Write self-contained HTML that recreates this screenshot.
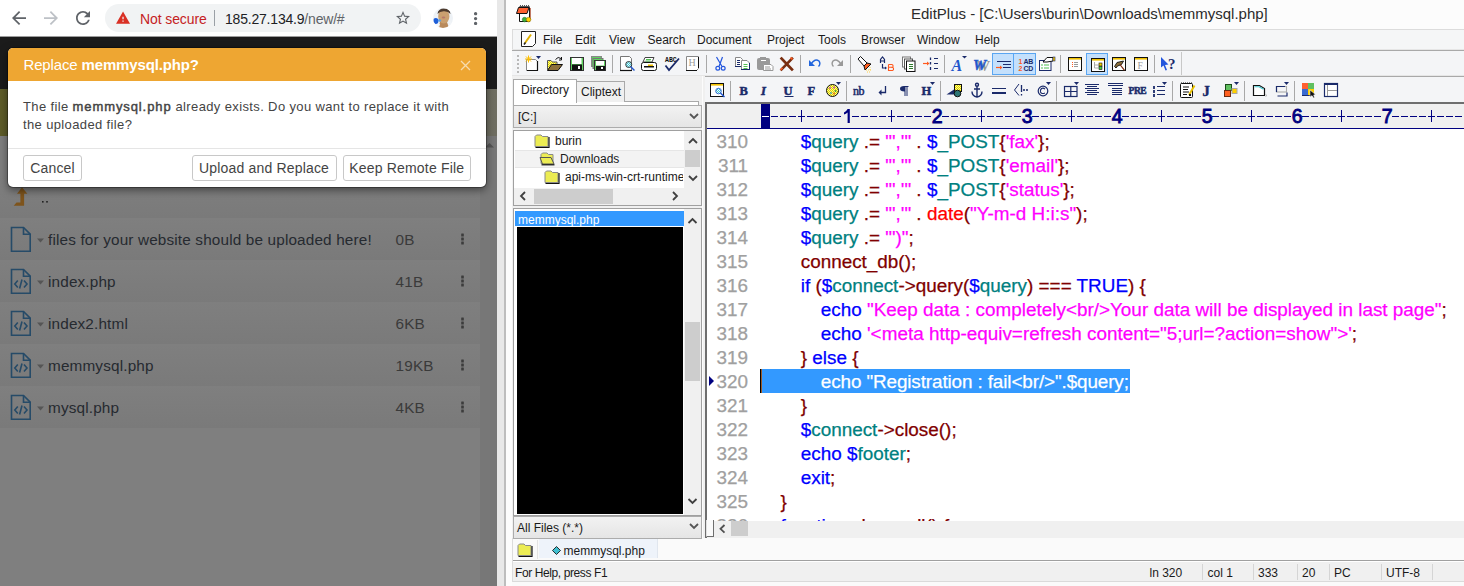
<!DOCTYPE html>
<html><head><meta charset="utf-8">
<style>
*{margin:0;padding:0;box-sizing:border-box}
html,body{width:1464px;height:586px;overflow:hidden;background:#fff;font-family:"Liberation Sans",sans-serif;position:relative}
.a{position:absolute}
/* chrome */
#chrome{left:0;top:0;width:497px;height:586px;overflow:hidden;background:#fff}
#omni{left:105px;top:4px;width:316px;height:28px;border-radius:14px;background:#f1f3f4}
#page{left:0;top:37px;width:497px;height:549px;background:#7f7f7f}
#modal{left:8px;top:48px;width:478px;height:139px;background:#fff;border-radius:5px;overflow:hidden;box-shadow:0 0 0 1px rgba(0,0,0,.3),0 3px 9px rgba(0,0,0,.5)}
#mhead{left:0;top:0;width:478px;height:33px;background:#eea632}
.btn{position:absolute;top:107px;height:26px;border:1px solid #c8c8c8;border-radius:3px;background:#fff;color:#444;font-size:14px;line-height:24px;text-align:center;letter-spacing:0.18px}
.row{position:absolute;left:0;width:480px;height:42px}
.fname{position:absolute;left:48px;top:12px;font-size:15.3px;letter-spacing:0.16px;color:#262a30;white-space:nowrap}
.fsize{position:absolute;left:395.5px;top:12px;font-size:15.3px;letter-spacing:0.2px;color:#3a3a3a}
/* editplus */
#sep1{left:497px;top:0;width:7px;height:586px;background:#e8e8e8}
#sep2{left:504px;top:0;width:2px;height:586px;background:#bdbdbd}
#ep{left:506px;top:0;width:958px;height:586px;background:#fcfcfc}
.menu{position:absolute;top:32px;font-size:12px;color:#1a1a1a}
.ln{position:absolute;left:0;width:43px;text-align:right;font-size:18.9px;line-height:25px;color:#a0a0a0;height:24px;-webkit-text-stroke:0.25px #a0a0a0}
.cd{position:absolute;font-size:18.9px;line-height:25px;white-space:pre;height:24px;-webkit-text-stroke:0.25px currentColor}
.t12{position:absolute;font-size:12px;line-height:15px;color:#1a1a1a;white-space:nowrap}
</style></head><body>
<div id="chrome" class="a">
  <svg class="a" style="left:0;top:0" width="497" height="36">
    <path transform="translate(8.5,7.5) scale(0.875)" d="M20 11H7.83l5.59-5.59L12 4l-8 8 8 8 1.41-1.41L7.83 13H20v-2z" fill="#5f6368"/>
    <path transform="translate(40.5,7.5) scale(0.875)" d="M12 4l-1.41 1.41L16.17 11H4v2h12.17l-5.58 5.59L12 20l8-8z" fill="#bdc1c6"/>
    <path transform="translate(72.5,7.5) scale(0.875)" d="M17.65 6.35C16.2 4.9 14.21 4 12 4c-4.42 0-7.99 3.58-7.99 8s3.57 8 7.99 8c3.73 0 6.84-2.55 7.730-6h-2.08c-.82 2.33-3.04 4-5.65 4-3.31 0-6-2.690-6-6s2.69-6 6-6c1.66 0 3.14.69 4.22 1.78L13 11h7V4l-2.35 2.35z" fill="#5f6368"/>
    <path transform="translate(465.85,8.75) scale(0.8125)" d="M12 8c1.1 0 2-.9 2-2s-.9-2-2-2-2 .9-2 2 .9 2 2 2zm0 2c-1.1 0-2 .9-2 2s.9 2 2 2 2-.9 2-2-.9-2-2-2zm0 6c-1.1 0-2 .9-2 2s.9 2 2 2 2-.9 2-2-.9-2-2-2z" fill="#5f6368"/>
  </svg>
  <div id="omni" class="a"></div>
  <div class="a" style="left:0;top:36px;width:497px;height:1px;background:#9c9c9c"></div>
  <svg class="a" style="left:0;top:0" width="497" height="36">
    <path transform="translate(115.4,10.3) scale(0.636)" d="M1 21h22L12 2 1 21zm12-3h-2v-2h2v2zm0-4h-2v-4h2v4z" fill="#d93025"/>
    <path transform="translate(394.6,9.6) scale(0.7)" d="M22 9.24l-7.19-.62L12 2 9.19 8.630 2 9.24l5.46 4.73L5.82 21 12 17.27 18.18 21l-1.63-7.03L22 9.24zM12 15.4l-3.76 2.27 1-4.28-3.32-2.88 4.38-.38L12 6.1l1.71 4.04 4.38.38-3.32 2.88 1 4.28L12 15.4z" fill="#5f6368"/>
    <defs><clipPath id="av"><circle cx="443" cy="18" r="10"/></clipPath></defs>
    <g clip-path="url(#av)">
      <rect x="433" y="8" width="20" height="20" fill="#eef2f6"/>
      <path d="M440 22L447 22 449 28 438 28Z" fill="#b98a5c"/>
      <ellipse cx="443.8" cy="16.5" rx="5.6" ry="7" fill="#caa070"/>
      <path d="M437.5 14Q438 8.5 444 8.5Q450 8.5 450.5 14Q448 11 444 11.2Q440 11 437.5 14Z" fill="#4d3b2e"/>
      <ellipse cx="443.5" cy="17.5" rx="1.8" ry="1" fill="#b8786a"/>
      <path d="M433 28L435 22 440 24 439 28Z" fill="#f6f8fa"/>
      <path d="M450 28L450 21 453 23 453 28Z" fill="#f1f4f7"/>
      <ellipse cx="435.8" cy="21" rx="2.6" ry="3" fill="#1f5fd8"/>
      <ellipse cx="439.5" cy="20.5" rx="1.6" ry="1.2" fill="#5aa0e8"/>
    </g>
  </svg>
  <div class="a" style="left:140px;top:10.5px;font-size:14px;color:#c5221f;letter-spacing:-0.1px">Not secure</div>
  <div class="a" style="left:214px;top:10px;width:1px;height:16px;background:#9aa0a6"></div>
  <div class="a" style="left:225px;top:10.5px;font-size:14px;color:#202124;letter-spacing:-0.2px">185.27.134.9<span style="color:#5f6368;-webkit-text-stroke-color:#5f6368">/new/#</span></div>
  <div id="page" class="a">
    <div class="a" style="left:0;top:0;width:497px;height:52px;background:#1b1b1b"></div>
    <div class="a" style="left:0;top:52px;width:497px;height:47px;background:linear-gradient(90deg,#5e5c29,#6f6e62)"></div>
    <div class="a" style="left:0;top:99px;width:480px;height:450px;background:#7f7f7f"></div>
    <div class="a" style="left:480px;top:99px;width:17px;height:450px;background:#777"></div>
    <div class="row" style="top:139px;background:linear-gradient(#7f7f7f,#7a7a7a)"></div>
    <div class="row" style="top:181px;background:linear-gradient(#7f7f7f,#7a7a7a)"></div>
    <div class="row" style="top:223px;background:linear-gradient(#7f7f7f,#7a7a7a)"></div>
    <div class="row" style="top:265px;background:linear-gradient(#7f7f7f,#7a7a7a)"></div>
    <div class="row" style="top:307px;background:linear-gradient(#7f7f7f,#7a7a7a)"></div>
    <div class="row" style="top:349px;background:linear-gradient(#7f7f7f,#7a7a7a)"></div>
  </div>
  <svg class="a" style="left:0;top:180px" width="497" height="250">
    <path d="M22 7.2L27.4 13.7H24.1V25.7H13.7L16.5 22.4H20.4V13.7H17Z" fill="#7e541c"/>
    <rect x="42" y="21" width="1.6" height="1.6" fill="#222"/><rect x="46.2" y="21" width="1.6" height="1.6" fill="#222"/>
    <g fill="none" stroke="#264b68" stroke-width="1.6">
      <path d="M11.5 47.5H23.5L30.2 54.2V71.3H11.5Z"/><path d="M23.5 47.5V54.2H30.2"/>
      <g transform="translate(0,42)"><path d="M11.5 47.5H23.5L30.2 54.2V71.3H11.5Z"/><path d="M23.5 47.5V54.2H30.2"/><path d="M17.8 58.5L14.8 62 17.8 65.5M24 58.5L27 62 24 65.5M22 57.5L19.6 66.5"/></g>
      <g transform="translate(0,84)"><path d="M11.5 47.5H23.5L30.2 54.2V71.3H11.5Z"/><path d="M23.5 47.5V54.2H30.2"/><path d="M17.8 58.5L14.8 62 17.8 65.5M24 58.5L27 62 24 65.5M22 57.5L19.6 66.5"/></g>
      <g transform="translate(0,126)"><path d="M11.5 47.5H23.5L30.2 54.2V71.3H11.5Z"/><path d="M23.5 47.5V54.2H30.2"/><path d="M17.8 58.5L14.8 62 17.8 65.5M24 58.5L27 62 24 65.5M22 57.5L19.6 66.5"/></g>
      <g transform="translate(0,168)"><path d="M11.5 47.5H23.5L30.2 54.2V71.3H11.5Z"/><path d="M23.5 47.5V54.2H30.2"/><path d="M17.8 58.5L14.8 62 17.8 65.5M24 58.5L27 62 24 65.5M22 57.5L19.6 66.5"/></g>
    </g>
    <g fill="#555"><path d="M37 58.5H44L40.5 62.5Z"/><path d="M37 100.5H44L40.5 104.5Z"/><path d="M37 142.5H44L40.5 146.5Z"/><path d="M37 184.5H44L40.5 188.5Z"/><path d="M37 226.5H44L40.5 230.5Z"/></g>
    <g fill="#3c3c3c"><rect x="461.2" y="53.5" width="2.6" height="3" rx="0.5"/><rect x="461.2" y="57.5" width="2.6" height="3" rx="0.5"/><rect x="461.2" y="61.5" width="2.6" height="3" rx="0.5"/><rect x="461.2" y="95.5" width="2.6" height="3" rx="0.5"/><rect x="461.2" y="99.5" width="2.6" height="3" rx="0.5"/><rect x="461.2" y="103.5" width="2.6" height="3" rx="0.5"/><rect x="461.2" y="137.5" width="2.6" height="3" rx="0.5"/><rect x="461.2" y="141.5" width="2.6" height="3" rx="0.5"/><rect x="461.2" y="145.5" width="2.6" height="3" rx="0.5"/><rect x="461.2" y="179.5" width="2.6" height="3" rx="0.5"/><rect x="461.2" y="183.5" width="2.6" height="3" rx="0.5"/><rect x="461.2" y="187.5" width="2.6" height="3" rx="0.5"/><rect x="461.2" y="221.5" width="2.6" height="3" rx="0.5"/><rect x="461.2" y="225.5" width="2.6" height="3" rx="0.5"/><rect x="461.2" y="229.5" width="2.6" height="3" rx="0.5"/></g>
  </svg>
  <svg class="a" style="left:480px;top:135px" width="17" height="20"><path d="M5 12.5L9.5 8 14 12.5Z" fill="#555"/></svg>
  <div class="fname" style="top:231px">files for your website should be uploaded here!</div>
  <div class="fname" style="top:273px">index.php</div>
  <div class="fname" style="top:315px">index2.html</div>
  <div class="fname" style="top:357px">memmysql.php</div>
  <div class="fname" style="top:399px">mysql.php</div>
  <div class="fsize" style="top:231px">0B</div>
  <div class="fsize" style="top:273px">41B</div>
  <div class="fsize" style="top:315px">6KB</div>
  <div class="fsize" style="top:357px">19KB</div>
  <div class="fsize" style="top:399px">4KB</div>
  <div id="modal" class="a">
    <div id="mhead" class="a"></div>
    <div class="a" style="left:15.5px;top:8px;font-size:15px;color:#fff;letter-spacing:-0.15px;white-space:nowrap">Replace <b>memmysql.php?</b></div>
    <svg class="a" style="left:450px;top:10px" width="16" height="16"><path d="M3 3L12 12M12 3L3 12" stroke="#f7dcae" stroke-width="1.3"/></svg>
    <div class="a" style="left:15px;top:50px;width:470px;font-size:13px;line-height:18px;color:#444;white-space:nowrap;letter-spacing:0.37px">The file <span style="-webkit-text-stroke:0.45px #444;letter-spacing:0.9px">memmysql.php</span> already exists. Do you want to replace it with<br>the uploaded file?</div>
    <div class="a" style="left:0;top:100px;width:478px;height:1px;background:#e5e5e5"></div>
    <div class="btn" style="left:15px;width:59px">Cancel</div>
    <div class="btn" style="left:183.5px;width:145px">Upload and Replace</div>
    <div class="btn" style="left:334.5px;width:128.5px">Keep Remote File</div>
  </div>
</div>
<div id="sep1" class="a"></div>
<div id="sep2" class="a"></div>
<div id="ep" class="a">
  <div class="a" style="left:405px;top:5px;font-size:15px;color:#2b2b2b;white-space:nowrap">EditPlus - [C:\Users\burin\Downloads\memmysql.php]</div>
  <!-- menubar -->
  <div class="a" style="left:6px;top:29px;width:952px;height:21px;background:#f5f6f7;border-top:1px solid #dcdcdc;border-left:1px solid #dcdcdc"></div>
  <div class="a" style="left:6px;top:49px;width:952px;height:1px;background:#e6e6e6"></div><div class="a" style="left:6px;top:50px;width:952px;height:1px;background:#a9a9a9"></div>
  <!-- toolbar1 -->
  <div class="a" style="left:6px;top:51px;width:952px;height:24px;background:#f4f5f7"></div>
  <div class="a" style="left:6px;top:75px;width:952px;height:1px;background:#e6e6e6"></div><div class="a" style="left:6px;top:76px;width:952px;height:1px;background:#a9a9a9"></div>
  <!-- left pane -->
  <div class="a" style="left:6px;top:76px;width:193px;height:462px;background:#f0f0f0"></div>
  <!-- toolbar2 -->
  <div class="a" style="left:199px;top:77px;width:759px;height:26px;background:#f4f5f7"></div>
  <!-- editor -->
  <div class="a" style="left:196px;top:76px;width:3px;height:462px;background:#f0f0f0;border-left:1px solid #fcfcfc"></div>
  <div class="a" style="left:199px;top:102px;width:759px;height:436px;background:#fff;border-top:2px solid #6e6e6e;border-left:2px solid #6e6e6e"></div>
  <div class="a" style="left:201px;top:104px;width:757px;height:24px;background:#f0f0f0"></div>
  <div class="a" style="left:201px;top:128px;width:757px;height:1px;background:#000080"></div>
  <div class="a" style="left:255px;top:104px;width:9px;height:24px;background:#000080"></div>
  <div class="a" style="left:201px;top:521px;width:757px;height:17px;background:#f0f0f0"></div>
  <div class="a" style="left:200px;top:520px;width:8px;height:17px;background:#fafafa;border-right:1.5px solid #6e6e6e;border-bottom:1.5px solid #6e6e6e;border-left:1px solid #e0e0e0"></div>
  <div class="a" style="left:225px;top:521px;width:17px;height:15px;background:#cdcdcd"></div>
  <svg class="a" style="left:210px;top:521px" width="12" height="16"><path d="M8.5 4L4.5 7.8 8.5 11.6" fill="none" stroke="#505050" stroke-width="1.8"/></svg>
<div class="a" style="left:199px;top:129px;width:759px;height:392px;overflow:hidden">
<div class="a" style="left:55px;top:240px;width:370px;height:24px;background:#3399ff"></div>
<div class="a" style="left:55px;top:240px;width:1px;height:24px;background:#000"></div><div class="a" style="left:56px;top:240px;width:1px;height:24px;background:#9a5a28"></div>
<svg class="a" style="left:4px;top:247px" width="6" height="10"><path d="M0 0L5 5 0 10Z" fill="#000080"/></svg>
<div class="ln" style="top:0px">310</div>
<div class="cd" style="top:0px;left:95.7px"><span style="color:#0000ff;-webkit-text-stroke-color:#0000ff">$</span><span style="color:#008080;-webkit-text-stroke-color:#008080">query</span><span style="color:#800000;-webkit-text-stroke-color:#800000"> .= </span><span style="color:#ff00ff;-webkit-text-stroke-color:#ff00ff">"','"</span><span style="color:#800000;-webkit-text-stroke-color:#800000"> . </span><span style="color:#0000ff;-webkit-text-stroke-color:#0000ff">$</span><span style="color:#008080;-webkit-text-stroke-color:#008080">_POST</span><span style="color:#800000;-webkit-text-stroke-color:#800000">{</span><span style="color:#ff00ff;-webkit-text-stroke-color:#ff00ff">'fax'</span><span style="color:#800000;-webkit-text-stroke-color:#800000">};</span></div>
<div class="ln" style="top:24px">311</div>
<div class="cd" style="top:24px;left:95.7px"><span style="color:#0000ff;-webkit-text-stroke-color:#0000ff">$</span><span style="color:#008080;-webkit-text-stroke-color:#008080">query</span><span style="color:#800000;-webkit-text-stroke-color:#800000"> .= </span><span style="color:#ff00ff;-webkit-text-stroke-color:#ff00ff">"','"</span><span style="color:#800000;-webkit-text-stroke-color:#800000"> . </span><span style="color:#0000ff;-webkit-text-stroke-color:#0000ff">$</span><span style="color:#008080;-webkit-text-stroke-color:#008080">_POST</span><span style="color:#800000;-webkit-text-stroke-color:#800000">{</span><span style="color:#ff00ff;-webkit-text-stroke-color:#ff00ff">'email'</span><span style="color:#800000;-webkit-text-stroke-color:#800000">};</span></div>
<div class="ln" style="top:48px">312</div>
<div class="cd" style="top:48px;left:95.7px"><span style="color:#0000ff;-webkit-text-stroke-color:#0000ff">$</span><span style="color:#008080;-webkit-text-stroke-color:#008080">query</span><span style="color:#800000;-webkit-text-stroke-color:#800000"> .= </span><span style="color:#ff00ff;-webkit-text-stroke-color:#ff00ff">"','"</span><span style="color:#800000;-webkit-text-stroke-color:#800000"> . </span><span style="color:#0000ff;-webkit-text-stroke-color:#0000ff">$</span><span style="color:#008080;-webkit-text-stroke-color:#008080">_POST</span><span style="color:#800000;-webkit-text-stroke-color:#800000">{</span><span style="color:#ff00ff;-webkit-text-stroke-color:#ff00ff">'status'</span><span style="color:#800000;-webkit-text-stroke-color:#800000">};</span></div>
<div class="ln" style="top:72px">313</div>
<div class="cd" style="top:72px;left:95.7px"><span style="color:#0000ff;-webkit-text-stroke-color:#0000ff">$</span><span style="color:#008080;-webkit-text-stroke-color:#008080">query</span><span style="color:#800000;-webkit-text-stroke-color:#800000"> .= </span><span style="color:#ff00ff;-webkit-text-stroke-color:#ff00ff">"','"</span><span style="color:#800000;-webkit-text-stroke-color:#800000"> . </span><span style="color:#ff0000;-webkit-text-stroke-color:#ff0000">date</span><span style="color:#800000;-webkit-text-stroke-color:#800000">(</span><span style="color:#ff00ff;-webkit-text-stroke-color:#ff00ff">"Y-m-d H:i:s"</span><span style="color:#800000;-webkit-text-stroke-color:#800000">);</span></div>
<div class="ln" style="top:96px">314</div>
<div class="cd" style="top:96px;left:95.7px"><span style="color:#0000ff;-webkit-text-stroke-color:#0000ff">$</span><span style="color:#008080;-webkit-text-stroke-color:#008080">query</span><span style="color:#800000;-webkit-text-stroke-color:#800000"> .= </span><span style="color:#ff00ff;-webkit-text-stroke-color:#ff00ff">"')"</span><span style="color:#800000;-webkit-text-stroke-color:#800000">;</span></div>
<div class="ln" style="top:120px">315</div>
<div class="cd" style="top:120px;left:95.7px"><span style="color:#800000;-webkit-text-stroke-color:#800000">connect_db();</span></div>
<div class="ln" style="top:144px">316</div>
<div class="cd" style="top:144px;left:95.7px"><span style="color:#0000ff;-webkit-text-stroke-color:#0000ff">if</span><span style="color:#800000;-webkit-text-stroke-color:#800000"> (</span><span style="color:#0000ff;-webkit-text-stroke-color:#0000ff">$</span><span style="color:#008080;-webkit-text-stroke-color:#008080">connect</span><span style="color:#800000;-webkit-text-stroke-color:#800000">-&gt;query(</span><span style="color:#0000ff;-webkit-text-stroke-color:#0000ff">$</span><span style="color:#008080;-webkit-text-stroke-color:#008080">query</span><span style="color:#800000;-webkit-text-stroke-color:#800000">) === </span><span style="color:#0000ff;-webkit-text-stroke-color:#0000ff">TRUE</span><span style="color:#800000;-webkit-text-stroke-color:#800000">) {</span></div>
<div class="ln" style="top:168px">317</div>
<div class="cd" style="top:168px;left:115.8px"><span style="color:#0000ff;-webkit-text-stroke-color:#0000ff">echo </span><span style="color:#ff00ff;-webkit-text-stroke-color:#ff00ff">"Keep data : completely&lt;br/&gt;Your data will be displayed in last page"</span><span style="color:#800000;-webkit-text-stroke-color:#800000">;</span></div>
<div class="ln" style="top:192px">318</div>
<div class="cd" style="top:192px;left:115.8px"><span style="color:#0000ff;-webkit-text-stroke-color:#0000ff">echo </span><span style="color:#ff00ff;-webkit-text-stroke-color:#ff00ff">'&lt;meta http-equiv=refresh content="5;url=?action=show"&gt;'</span><span style="color:#800000;-webkit-text-stroke-color:#800000">;</span></div>
<div class="ln" style="top:216px">319</div>
<div class="cd" style="top:216px;left:95.7px"><span style="color:#800000;-webkit-text-stroke-color:#800000">} </span><span style="color:#0000ff;-webkit-text-stroke-color:#0000ff">else</span><span style="color:#800000;-webkit-text-stroke-color:#800000"> {</span></div>
<div class="ln" style="top:240px">320</div>
<div class="cd" style="top:240px;left:115.8px;letter-spacing:-0.12px"><span style="color:#fff;-webkit-text-stroke-color:#fff">echo "Registration : fail&lt;br/&gt;".$query;</span></div>
<div class="ln" style="top:264px">321</div>
<div class="cd" style="top:264px;left:95.7px"><span style="color:#800000;-webkit-text-stroke-color:#800000">}</span></div>
<div class="ln" style="top:288px">322</div>
<div class="cd" style="top:288px;left:95.7px"><span style="color:#0000ff;-webkit-text-stroke-color:#0000ff">$</span><span style="color:#008080;-webkit-text-stroke-color:#008080">connect</span><span style="color:#800000;-webkit-text-stroke-color:#800000">-&gt;close();</span></div>
<div class="ln" style="top:312px">323</div>
<div class="cd" style="top:312px;left:95.7px"><span style="color:#0000ff;-webkit-text-stroke-color:#0000ff">echo </span><span style="color:#0000ff;-webkit-text-stroke-color:#0000ff">$</span><span style="color:#008080;-webkit-text-stroke-color:#008080">footer</span><span style="color:#800000;-webkit-text-stroke-color:#800000">;</span></div>
<div class="ln" style="top:336px">324</div>
<div class="cd" style="top:336px;left:95.7px"><span style="color:#0000ff;-webkit-text-stroke-color:#0000ff">exit</span><span style="color:#800000;-webkit-text-stroke-color:#800000">;</span></div>
<div class="ln" style="top:360px">325</div>
<div class="cd" style="top:360px;left:75.6px"><span style="color:#800000;-webkit-text-stroke-color:#800000">}</span></div>
<div class="ln" style="top:384px">326</div>
<div class="cd" style="top:384px;left:75.6px"><span style="color:#0000ff;-webkit-text-stroke-color:#0000ff">function</span><span style="color:#800000;-webkit-text-stroke-color:#800000"> show_all() {</span></div>
</div>
  <!-- file tabs -->
  <div class="a" style="left:6px;top:538px;width:952px;height:22px;background:#fafafa"></div>
  <div class="a" style="left:6px;top:560px;width:952px;height:1px;background:#a0a0a0"></div>
  <div class="a" style="left:6px;top:561px;width:952px;height:20px;background:#f0f0f0;border-top:1px solid #fff"></div>
  <div class="a" style="left:6px;top:581px;width:952px;height:5px;background:#fafafa;border-top:1px solid #dadada"></div>
</div>

<div id="lp" class="a" style="left:0;top:0;width:1464px;height:586px;pointer-events:none">

  <!-- menu -->
  <div class="t12" style="left:543px;top:32.5px">File</div>
  <div class="t12" style="left:575px;top:32.5px">Edit</div>
  <div class="t12" style="left:609px;top:32.5px">View</div>
  <div class="t12" style="left:647.5px;top:32.5px">Search</div>
  <div class="t12" style="left:697px;top:32.5px">Document</div>
  <div class="t12" style="left:767px;top:32.5px">Project</div>
  <div class="t12" style="left:818px;top:32.5px">Tools</div>
  <div class="t12" style="left:861px;top:32.5px">Browser</div>
  <div class="t12" style="left:917px;top:32.5px">Window</div>
  <div class="t12" style="left:975px;top:32.5px">Help</div>
  <!-- toolbar separators -->
  <div class="a" style="left:612px;top:55px;width:1px;height:18px;background:#a8a8a8"></div>
  <div class="a" style="left:706px;top:55px;width:1px;height:18px;background:#a8a8a8"></div>
  <div class="a" style="left:800px;top:55px;width:1px;height:18px;background:#a8a8a8"></div>
  <div class="a" style="left:850px;top:55px;width:1px;height:18px;background:#a8a8a8"></div>
  <div class="a" style="left:944px;top:55px;width:1px;height:18px;background:#a8a8a8"></div>
  <div class="a" style="left:1060px;top:55px;width:1px;height:18px;background:#a8a8a8"></div>
  <div class="a" style="left:1154px;top:55px;width:1px;height:18px;background:#a8a8a8"></div>
  <div class="a" style="left:1181px;top:52px;width:1px;height:23px;background:#c8c8c8"></div>
  <div class="a" style="left:992px;top:53px;width:22px;height:22px;background:#c4e0fc;border:1px solid #5aa6f2"></div>
  <div class="a" style="left:1013px;top:53px;width:23px;height:22px;background:#c4e0fc;border:1px solid #5aa6f2"></div>
  <div class="a" style="left:1086px;top:53px;width:22px;height:22px;background:#c4e0fc;border:1px solid #5aa6f2"></div>
  <div class="a" style="left:730px;top:81px;width:1px;height:20px;background:#a8a8a8"></div>
  <div class="a" style="left:846px;top:81px;width:1px;height:20px;background:#a8a8a8"></div>
  <div class="a" style="left:940px;top:81px;width:1px;height:20px;background:#a8a8a8"></div>
  <div class="a" style="left:1056px;top:81px;width:1px;height:20px;background:#a8a8a8"></div>
  <div class="a" style="left:1172px;top:81px;width:1px;height:20px;background:#a8a8a8"></div>
  <div class="a" style="left:1244px;top:81px;width:1px;height:20px;background:#a8a8a8"></div>
  <div class="a" style="left:1294px;top:81px;width:1px;height:20px;background:#a8a8a8"></div>
<!-- TB1 -->
<svg class="a" style="left:0;top:0" width="1464" height="110">
<defs>
<pattern id="yck" width="2" height="2" patternUnits="userSpaceOnUse"><rect width="2" height="2" fill="#ffff80"/><rect width="1" height="1" fill="#e0d000"/><rect x="1" y="1" width="1" height="1" fill="#e0d000"/></pattern>
<pattern id="cck" width="2" height="2" patternUnits="userSpaceOnUse"><rect width="2" height="2" fill="#e8ffff"/><rect width="1" height="1" fill="#40c0d0"/><rect x="1" y="1" width="1" height="1" fill="#40c0d0"/></pattern>
</defs>
<!-- gripper -->
<g fill="#b8b8b8"><rect x="517" y="55" width="2" height="2"/><rect x="517" y="59" width="2" height="2"/><rect x="517" y="63" width="2" height="2"/><rect x="517" y="67" width="2" height="2"/><rect x="517" y="71" width="2" height="2"/></g>
<!-- app icon in title -->
<g>
<path d="M519.5 13.5V21.5H529.5V7.5" fill="#fff" stroke="#111" stroke-width="1"/>
<path d="M530.3 8V20" stroke="#a03010" stroke-width="0.8"/>
<path d="M518.5 7.5H529L527 13.5H516.5Z" fill="#ff6030" stroke="#111" stroke-width="1"/>
<path d="M519.5 7.5L520.5 5.5 521.5 7.5 522.5 5.5 523.5 7.5 524.5 5.5 525.5 7.5 526.5 5.5 527.5 7.5 528.5 5.5 529.5 7.5" fill="none" stroke="#111" stroke-width="0.9"/>
<circle cx="524.6" cy="19.6" r="2.3" fill="#40b040" stroke="#206020" stroke-width="0.5"/>
<circle cx="528.6" cy="19.6" r="2.3" fill="#ffd000" stroke="#806000" stroke-width="0.5"/>
</g>
<!-- menu pencil doc icon -->
<g>
<path d="M521.5 31.5H535.5V43.5L532.5 46.5H521.5Z" fill="#fff" stroke="#222"/>
<path d="M525 43L531 34.5" stroke="#e0b000" stroke-width="2"/><path d="M524 44.5l1.5-2" stroke="#222" stroke-width="1.5"/>
</g>
<!-- new -->
<g>
<path d="M526.5 59.5H535.5L537.5 61.5V70.5H526.5Z" fill="#fff" stroke="#888"/>
<path d="M527 70.5H538M537.5 61V70.5" stroke="#111" stroke-width="1.2"/>
<path d="M528.5 55.5v7M525 59h7M526 56.5l5 5M531 56.5l-5 5" stroke="#ffc000" stroke-width="1"/>
<path d="M536 56H541L538.5 59Z" fill="#1a2a6a"/>
</g>
<!-- open -->
<g>
<path d="M547.5 69.5V60.5H551L552.5 62H557V69.5Z" fill="url(#yck)" stroke="#555"/>
<path d="M547.5 70.5L551.5 64.5H562.5L558 70.5Z" fill="#8b6f3b" stroke="#111"/>
<path d="M555.5 59.5Q558 56 561 58.5" fill="none" stroke="#111" stroke-width="1"/><path d="M561.5 57V60H559" fill="none" stroke="#111"/>
</g>
<!-- save -->
<g>
<rect x="570.5" y="57.5" width="13" height="13" fill="#60d060" stroke="#333"/>
<rect x="572" y="58" width="9.5" height="6" fill="#fff"/>
<rect x="572" y="64.5" width="10" height="6" fill="#111"/><rect x="578" y="66" width="2" height="3" fill="#fff"/>
</g>
<!-- save all -->
<g>
<rect x="591.5" y="56.5" width="10" height="10" fill="#60d060" stroke="#888"/>
<rect x="593" y="58.5" width="10" height="10" fill="#60d060" stroke="#777"/>
<rect x="594.5" y="60.5" width="11" height="10" fill="#60d060" stroke="#333"/>
<rect x="596" y="61" width="8" height="4.5" fill="#fff"/>
<rect x="596" y="66" width="9" height="4.5" fill="#111"/><rect x="601" y="67" width="2" height="2" fill="#fff"/>
</g>
<!-- print preview -->
<g>
<path d="M620.5 56.5H629.5L631.5 58.5V70.5H620.5Z" fill="#fff" stroke="#777"/>
<path d="M620 70.5H632" stroke="#111" stroke-width="1.2"/>
<circle cx="628.7" cy="64.5" r="3" fill="url(#cck)" stroke="#111" stroke-width="0.8"/>
<path d="M630.5 66.5L634.5 70.5" stroke="#2255cc" stroke-width="1.5"/>
</g>
<!-- print -->
<g>
<path d="M645 57.5H654L652 62H643Z" fill="#fff" stroke="#444"/>
<path d="M646 59.5h5M645.5 61h5" stroke="#50c050"/>
<rect x="641.5" y="62.5" width="15" height="8" rx="2" fill="#fff" stroke="#111"/>
<rect x="644" y="66" width="10" height="1.5" fill="#111"/><rect x="648" y="64.5" width="5" height="1.5" fill="#f0c000"/>
</g>
<!-- spell -->
<g>
<text x="665" y="62" font-family="Liberation Mono" font-weight="bold" font-size="6.5" fill="#111">ABC</text>
<path d="M665.5 65.5L669 70L679 58.5" fill="none" stroke="#1a2a6a" stroke-width="1.8"/>
</g>
<!-- H doc -->
<g>
<path d="M686.5 56.5H698.5V68.5L696.5 70.5H686.5Z" fill="#fff" stroke="#888"/>
<path d="M686 70.5H697M698.5 57V68" stroke="#111"/>
<text x="688.5" y="66" font-family="Liberation Serif" font-size="10" fill="#999">H</text>
</g>
<!-- cut -->
<g fill="none" stroke="#2255dd" stroke-width="1.2">
<circle cx="717.8" cy="68.3" r="1.9"/><circle cx="723.2" cy="68.3" r="1.9"/>
<path d="M716.5 57L722 66.5M722.5 57L719 66.5"/>
</g>
<!-- copy -->
<g>
<path d="M735.5 57.5H740.5L742.5 59.5V66.5H735.5Z" fill="#fff" stroke="#888"/>
<path d="M735 66.5H742" stroke="#1a2a6a"/>
<path d="M737 60.5h3M737 62.5h3M737 64.5h3" stroke="#1a2a6a"/>
<path d="M741.5 60.5H747L749.5 63V69.5H741.5Z" fill="#fff" stroke="#888"/>
<path d="M741 69.5H750M749.5 63V69.5" stroke="#1a2a6a"/>
<path d="M743.5 64.5h4M743.5 66.5h4M743.5 68.5h4" stroke="#50c050"/>
</g>
<!-- paste -->
<g>
<rect x="757" y="58" width="13" height="12" rx="2" fill="#999"/>
<rect x="760" y="57" width="6" height="2" fill="#999"/><rect x="761" y="60" width="5" height="1" fill="#fff"/>
<path d="M763.5 64.5H771L773 66.5V70.5H763.5Z" fill="#fff" stroke="#999"/>
<path d="M765 67h5M765 69h6" stroke="#999"/>
</g>
<!-- delete -->
<g stroke-width="2.6" stroke-linecap="square">
<path d="M781.5 58.5L792 69.5M792 58.5L781.5 69.5" stroke="#7a2e10"/>
<path d="M781 69.5l1-1M791 58l1 1" stroke="#ff5a20" stroke-width="1.5"/>
</g>
<!-- undo -->
<g fill="none" stroke="#2266dd" stroke-width="1.4">
<path d="M811 64Q815 58 819 61Q821 64 818.5 66.5"/>
</g>
<path d="M809 60V66H815Z" fill="#2266dd"/>
<g fill="none" stroke="#999" stroke-width="1.4">
<path d="M841 64Q837 58 833 61Q831 64 833.5 66.5"/>
</g>
<path d="M843 60V66H837Z" fill="#999"/>
<!-- flashlight -->
<g>
<path d="M858 59L860.5 56.5L867 63L864 66Z" fill="#fff" stroke="#111" stroke-width="1"/>
<path d="M864 66L867 63L871 64L865 70Z" fill="#ff6020" stroke="#111" stroke-width="1"/>
<path d="M866 70h5M867 72h4M870 67v4" stroke="#ffd040" stroke-width="1" stroke-dasharray="1 1"/>
</g>
<!-- replace A->B -->
<g>
<path d="M880.5 63V59.5L882.5 57L884.5 59.5V63M880.5 61h4" fill="none" stroke="#1a2a6a" stroke-width="1.2"/>
<path d="M882.5 64V68H885" fill="none" stroke="#1a2a6a" stroke-width="1.2"/><path d="M885 66.5L887 68L885 69.5Z" fill="#1a2a6a"/>
<path d="M888.5 64.5H892Q893.5 65 893 66.8Q892.5 67.3 890.5 67.3H888.5M888.5 64.5V70.5H892.5Q894 70 893.5 68Q893 67.3 891 67.3" fill="none" stroke="#ff5a20" stroke-width="1.1"/>
</g>
<!-- find in files -->
<g>
<rect x="902.5" y="57" width="8" height="10" fill="#fff" stroke="#777"/>
<rect x="904.5" y="59" width="8" height="10" fill="#fff" stroke="#555"/>
<rect x="906.5" y="61" width="8.5" height="10.5" fill="#fff" stroke="#111"/>
<path d="M909 64.5h4M909 66.5h4M909 68.5h4" stroke="#2a7a2a"/>
</g>
<!-- goto line -->
<g>
<path d="M923 63.5h5" stroke="#ff5a20" stroke-width="1.2"/><path d="M927 61.5L929.5 63.5 927 65.5Z" fill="#ff5a20"/>
<path d="M930.5 57.5v2.5M930.5 62v2.5M930.5 67v3" stroke="#1a2a6a" stroke-width="1.3"/>
<path d="M934 58.5h4M934 63.5h4M934 68.5h4" stroke="#1a2a6a" stroke-width="1.2"/>
</g>
<!-- A font -->
<g>
<text x="951.5" y="70.5" font-family="Liberation Serif" font-style="italic" font-weight="bold" font-size="16" fill="#2255cc">A</text>
<path d="M962 56H967L964.5 58.5Z" fill="#1a2a6a"/>
</g>
<!-- W -->
<g>
<text x="976" y="71" font-family="Liberation Serif" font-style="italic" font-weight="bold" font-size="15" fill="#999" letter-spacing="-1">W</text>
<text x="973" y="70" font-family="Liberation Serif" font-style="italic" font-weight="bold" font-size="15" fill="#2255cc" stroke="#2255cc" stroke-width="0.4">W</text>
</g>
<!-- word wrap -->
<g stroke="#1a2a6a" stroke-width="1.2">
<path d="M997 61.5h14M1003 64.5h8M1003 67.5h8"/>
</g>
<path d="M996 67.5h5" stroke="#ff5a20" stroke-width="1.2"/><path d="M1000 65.5L1002.5 67.5 1000 69.5Z" fill="#ff5a20"/>
<!-- line num -->
<g>
<text x="1018.5" y="63.8" font-family="Liberation Sans" font-weight="bold" font-size="7" fill="#ff5a20">1</text>
<text x="1018.5" y="70.8" font-family="Liberation Sans" font-weight="bold" font-size="7" fill="#ff5a20">2</text>
<text x="1023.5" y="63.8" font-family="Liberation Sans" font-weight="bold" font-size="7" fill="#1a2a6a" letter-spacing="-0.2">AB</text>
<text x="1023.5" y="70.8" font-family="Liberation Sans" font-weight="bold" font-size="7" fill="#1a2a6a" letter-spacing="-0.2">CD</text>
</g>
<!-- cert -->
<g>
<rect x="1039.5" y="60.5" width="11.5" height="10" fill="#fff" stroke="#1a2a6a"/>
<path d="M1041 65h2M1044 65h5M1041 68h2M1044 68h5" stroke="#50c050"/>
<path d="M1043 62L1047 57.5H1053L1053 61L1047 62Z" fill="#fff" stroke="#111"/>
<rect x="1053" y="57" width="2" height="4" fill="#ffd000" stroke="#1a2a6a" stroke-width="0.6"/>
</g>
<!-- window list -->
<g>
<rect x="1068.5" y="57.5" width="13" height="13" fill="#fff" stroke="#111"/>
<rect x="1069" y="58" width="12" height="1.6" fill="#f0c000"/>
<path d="M1072 62.5h1M1072 64.5h1M1072 66.5h1" stroke="#ff5a20"/>
<path d="M1074 62.5h4M1074 64.5h4M1074 66.5h4" stroke="#999"/>
</g>
<!-- window pressed -->
<g>
<rect x="1091.5" y="58.5" width="13" height="13" fill="#fff" stroke="#111"/>
<rect x="1092" y="59" width="12" height="1.6" fill="#f0c000"/>
<path d="M1094.5 62v6h4M1094.5 65h4" fill="none" stroke="#aaa"/>
<rect x="1099" y="63" width="3" height="3" fill="#f0d000" stroke="#111" stroke-width="0.6"/>
<rect x="1099" y="66.5" width="3" height="3" fill="#40d040" stroke="#111" stroke-width="0.6"/>
</g>
<!-- hammer -->
<g>
<rect x="1112.5" y="57.5" width="13" height="13" fill="#fff" stroke="#111"/>
<rect x="1113" y="58" width="12" height="1.6" fill="#f0c000"/>
<path d="M1114.5 66.5L1117 62.5L1123.5 61L1121.5 64.5L1117.5 66L1116 68Z" fill="#8b6f3b" stroke="#111" stroke-width="0.9"/>
<path d="M1120 64.5L1124.5 70.3" stroke="#7a2a10" stroke-width="1.2"/>
</g>
<!-- F window -->
<g>
<rect x="1134.5" y="57.5" width="13" height="13" fill="#fff" stroke="#111"/>
<rect x="1135" y="58" width="12" height="1.6" fill="#f0c000"/>
<text x="1137.5" y="68.5" font-family="Liberation Serif" font-size="9.5" fill="#999">F</text>
</g>
<!-- help -->
<g>
<path d="M1161 57V67.5L1163.5 65.5L1165.5 70.5L1167 70L1165 65L1168.5 64.5Z" fill="#2255dd"/>
<text x="1168" y="69" font-family="Liberation Serif" font-weight="bold" font-size="15" fill="#1a2a6a">?</text>
</g>
</svg>

<!-- /TB1 -->
<!-- TB2 -->
<svg class="a" style="left:0;top:0" width="1464" height="110">
<!-- find window -->
<g>
<rect x="710.5" y="83.5" width="13" height="13" fill="#fff" stroke="#111"/>
<rect x="711" y="84" width="12" height="1.6" fill="#f0c000"/>
<circle cx="718.5" cy="91" r="2.8" fill="url(#cck)" stroke="#2255cc" stroke-width="0.8"/>
<path d="M720.5 93L724.5 97" stroke="#2255cc" stroke-width="1.5"/>
</g>
<g font-family="Liberation Serif" font-weight="bold" fill="#1a2a6a" stroke="#1a2a6a" stroke-width="0.5">
<text x="739.5" y="95" font-size="12.5">B</text>
<text x="761" y="95" font-size="12.5" font-style="italic">I</text>
<text x="783.5" y="95" font-size="12.5">U</text>
<text x="807.5" y="95" font-size="12.5">F</text>
<text x="853" y="95" font-size="12" font-weight="normal" letter-spacing="-0.6">nb</text>

<text x="921.5" y="95" font-size="12.5">H</text>
<text x="1128.5" y="94" font-size="9.5" letter-spacing="-0.4">PRE</text>
<text x="1202.5" y="96" font-size="14.5">J</text>
</g>
<path d="M784.5 96.5h9" stroke="#1a2a6a" stroke-width="1"/>
<!-- palette -->
<g>
<circle cx="832.5" cy="90.5" r="6" fill="url(#yck)" stroke="#111" stroke-width="1"/>
<circle cx="830" cy="88" r="0.9" fill="#c040c0"/><circle cx="834" cy="87.5" r="0.9" fill="#c040c0"/><circle cx="835.5" cy="91" r="0.9" fill="#40a040"/><circle cx="831" cy="93" r="0.9" fill="#40a0c0"/><circle cx="834" cy="93.5" r="0.9" fill="#e06020"/>
<path d="M836 82H841L838.5 85Z" fill="#1a2a6a"/>
</g>
<!-- return -->
<path d="M904 86H908.5V87H907.5V96H906.5V87H905.5V96H904.5V91.5Q900 91.5 900 88.8Q900 86 904 86Z" fill="#1a2a6a"/>
<path d="M885.5 86V92.5H880" fill="none" stroke="#1a2a6a" stroke-width="1.3"/>
<path d="M881.5 89.5L878.5 92.5 881.5 95.5Z" fill="#1a2a6a"/>
<path d="M930 82H935L932.5 85Z" fill="#1a2a6a"/>
<!-- shapes -->
<g>
<path d="M946.5 94.5L957 87.5V94.5Z" fill="#1a2a6a"/>
<rect x="954.5" y="84.5" width="7" height="7" fill="url(#yck)" stroke="#111"/>
<circle cx="957.5" cy="93.5" r="3.3" fill="#2d7575" stroke="#111" stroke-width="1"/>
</g>
<!-- anchor -->
<g fill="none" stroke="#1a2a6a" stroke-width="1.4">
<circle cx="977" cy="84.8" r="1.5"/>
<path d="M977 86.5V97M974 89h6M972 91.5Q972 96 977 97Q982 96 982 91.5"/>
</g>
<!-- = -->
<path d="M992 88.5h14" stroke="#1a2a6a" stroke-width="1"/><path d="M992 93h14" stroke="#1a2a6a" stroke-width="2"/>
<!-- <!-- -->
<path d="M1019 84L1014.5 90 1019 95.5" fill="none" stroke="#1a2a6a" stroke-width="1"/>
<path d="M1021.5 85v7M1021.5 94v1.5" stroke="#1a2a6a" stroke-width="1.3"/>
<path d="M1023 90h2M1026 90h2" stroke="#1a2a6a" stroke-width="1.5"/>
<!-- (c) -->
<circle cx="1043" cy="91" r="4.8" fill="none" stroke="#1a2a6a" stroke-width="1.2"/>
<path d="M1045 89.2Q1043.5 87.5 1041.5 88.5Q1040 90 1040.5 92Q1041.5 94.5 1045 93" fill="none" stroke="#1a2a6a" stroke-width="1.1"/>
<path d="M1046 82H1051L1048.5 85Z" fill="#1a2a6a"/>
<!-- table -->
<rect x="1064.5" y="86.5" width="12.5" height="10" fill="none" stroke="#1a2a6a" stroke-width="1.2"/>
<path d="M1070.8 86.5v10M1064.5 91.5h12.5" stroke="#1a2a6a" stroke-width="1.2"/>
<path d="M1074 82H1079L1076.5 85Z" fill="#1a2a6a"/>
<!-- center -->
<g stroke="#1a2a6a" stroke-width="1">
<path d="M1085 84.5h14M1087 86.5h10M1085 88.5h14M1087 90.5h10M1085 92.5h14M1087 94.5h10"/>
<path d="M1108 83.5h15M1108 85.5h15M1112 88.5h10M1112 90.5h10M1112 92.5h10M1112 94.5h10"/>
<path d="M1157 86.5h8M1157 90.5h8M1157 94.5h8"/>
</g>
<path d="M1154 86v3M1154 90v3M1154 94v3" stroke="#1a2a6a" stroke-width="1.8"/>
<path d="M1162 82H1167L1164.5 85Z" fill="#1a2a6a"/>
<!-- notepad -->
<g>
<rect x="1180.5" y="83.5" width="12" height="14" rx="1" fill="#fff" stroke="#111"/>
<path d="M1181 83h12" stroke="#111" stroke-dasharray="1 1"/>
<path d="M1183 87h6M1183 89.5h5M1183 92h6M1183 94.5h4" stroke="#111"/>
<path d="M1189 95L1194.5 85.5" stroke="#e8c000" stroke-width="2"/>
<rect x="1189" y="94" width="2" height="2" fill="#111"/>
</g>
<!-- cubes -->
<g>
<rect x="1225.5" y="84.5" width="6" height="6" fill="#60c060" stroke="#1a4a1a"/>
<rect x="1224.5" y="90.5" width="6" height="6" fill="#ff6020" stroke="#6a2a10"/>
<rect x="1232" y="88.5" width="5" height="5" fill="#ffd000" stroke="#a8a8a8"/>
<path d="M1234 82H1239L1236.5 85Z" fill="#1a2a6a"/>
</g>
<!-- window -->
<g fill="none">
<path d="M1253.5 95.5V85.5H1259.5L1264.5 88.5V95.5Z" fill="#fff" stroke="#111" stroke-width="1.2"/>
<path d="M1254.5 86.8H1259L1263.5 89.3" stroke="#40c8d0" stroke-width="1.1"/>
<path d="M1265.5 94.5L1267 95.5 1265.5 96.5" stroke="#aaa" stroke-width="0.8"/>
</g>
<!-- bracket -->
<g fill="none">
<rect x="1276.5" y="86.5" width="10" height="5.5" stroke="#aaa" stroke-width="1.1"/>
<path d="M1276.5 92V86.5H1285" stroke="#1a2a6a" stroke-width="1.2"/>
<path d="M1277.5 96H1287V92.5" stroke="#1a2a6a" stroke-width="1.2"/>
</g>
<path d="M1284 82H1289L1286.5 85Z" fill="#1a2a6a"/>
<!-- colors -->
<g>
<rect x="1302" y="83" width="6" height="6" fill="#ff6030"/><rect x="1308" y="83" width="6" height="6" fill="#60c060"/>
<rect x="1302" y="89" width="6" height="6" fill="#3a6ad0"/><rect x="1308" y="89" width="6" height="6" fill="#ffd000"/>
<path d="M1302 95.5h12" stroke="#1a2a6a"/>
<path d="M1310 90V97L1312 95.5L1313.5 98L1314.5 97.5L1313.5 95L1315.5 94.5Z" fill="#111" stroke="#fff" stroke-width="0.5"/>
</g>
<!-- layout -->
<g>
<rect x="1324.5" y="83.5" width="13" height="13" fill="#fff" stroke="#1a2a6a" stroke-width="1.2"/>
<rect x="1324.5" y="83" width="13" height="2" fill="#1a2a6a"/>
<path d="M1327.5 85v11M1328 90.5h9" stroke="#999"/>
</g>
</svg>

<!-- /TB2 -->
<!-- RULER -->
<svg class="a" style="left:0;top:0" width="1464" height="130">
<rect x="762" y="116" width="7" height="1" fill="#fff"/>
<rect x="771" y="116" width="7" height="1" fill="#000080"/>
<rect x="780" y="116" width="7" height="1" fill="#000080"/>
<rect x="789" y="116" width="7" height="1" fill="#000080"/>
<rect x="798" y="116" width="7" height="1" fill="#000080"/>
<rect x="801" y="110" width="1" height="12" fill="#000080"/>
<rect x="807" y="116" width="7" height="1" fill="#000080"/>
<rect x="816" y="116" width="7" height="1" fill="#000080"/>
<rect x="825" y="116" width="7" height="1" fill="#000080"/>
<rect x="834" y="116" width="7" height="1" fill="#000080"/>
<rect x="852" y="116" width="7" height="1" fill="#000080"/>
<rect x="861" y="116" width="7" height="1" fill="#000080"/>
<rect x="870" y="116" width="7" height="1" fill="#000080"/>
<rect x="879" y="116" width="7" height="1" fill="#000080"/>
<rect x="888" y="116" width="7" height="1" fill="#000080"/>
<rect x="891" y="110" width="1" height="12" fill="#000080"/>
<rect x="897" y="116" width="7" height="1" fill="#000080"/>
<rect x="906" y="116" width="7" height="1" fill="#000080"/>
<rect x="915" y="116" width="7" height="1" fill="#000080"/>
<rect x="924" y="116" width="7" height="1" fill="#000080"/>
<rect x="942" y="116" width="7" height="1" fill="#000080"/>
<rect x="951" y="116" width="7" height="1" fill="#000080"/>
<rect x="960" y="116" width="7" height="1" fill="#000080"/>
<rect x="969" y="116" width="7" height="1" fill="#000080"/>
<rect x="978" y="116" width="7" height="1" fill="#000080"/>
<rect x="981" y="110" width="1" height="12" fill="#000080"/>
<rect x="987" y="116" width="7" height="1" fill="#000080"/>
<rect x="996" y="116" width="7" height="1" fill="#000080"/>
<rect x="1005" y="116" width="7" height="1" fill="#000080"/>
<rect x="1014" y="116" width="7" height="1" fill="#000080"/>
<rect x="1032" y="116" width="7" height="1" fill="#000080"/>
<rect x="1041" y="116" width="7" height="1" fill="#000080"/>
<rect x="1050" y="116" width="7" height="1" fill="#000080"/>
<rect x="1059" y="116" width="7" height="1" fill="#000080"/>
<rect x="1068" y="116" width="7" height="1" fill="#000080"/>
<rect x="1071" y="110" width="1" height="12" fill="#000080"/>
<rect x="1077" y="116" width="7" height="1" fill="#000080"/>
<rect x="1086" y="116" width="7" height="1" fill="#000080"/>
<rect x="1095" y="116" width="7" height="1" fill="#000080"/>
<rect x="1104" y="116" width="7" height="1" fill="#000080"/>
<rect x="1122" y="116" width="7" height="1" fill="#000080"/>
<rect x="1131" y="116" width="7" height="1" fill="#000080"/>
<rect x="1140" y="116" width="7" height="1" fill="#000080"/>
<rect x="1149" y="116" width="7" height="1" fill="#000080"/>
<rect x="1158" y="116" width="7" height="1" fill="#000080"/>
<rect x="1161" y="110" width="1" height="12" fill="#000080"/>
<rect x="1167" y="116" width="7" height="1" fill="#000080"/>
<rect x="1176" y="116" width="7" height="1" fill="#000080"/>
<rect x="1185" y="116" width="7" height="1" fill="#000080"/>
<rect x="1194" y="116" width="7" height="1" fill="#000080"/>
<rect x="1212" y="116" width="7" height="1" fill="#000080"/>
<rect x="1221" y="116" width="7" height="1" fill="#000080"/>
<rect x="1230" y="116" width="7" height="1" fill="#000080"/>
<rect x="1239" y="116" width="7" height="1" fill="#000080"/>
<rect x="1248" y="116" width="7" height="1" fill="#000080"/>
<rect x="1251" y="110" width="1" height="12" fill="#000080"/>
<rect x="1257" y="116" width="7" height="1" fill="#000080"/>
<rect x="1266" y="116" width="7" height="1" fill="#000080"/>
<rect x="1275" y="116" width="7" height="1" fill="#000080"/>
<rect x="1284" y="116" width="7" height="1" fill="#000080"/>
<rect x="1302" y="116" width="7" height="1" fill="#000080"/>
<rect x="1311" y="116" width="7" height="1" fill="#000080"/>
<rect x="1320" y="116" width="7" height="1" fill="#000080"/>
<rect x="1329" y="116" width="7" height="1" fill="#000080"/>
<rect x="1338" y="116" width="7" height="1" fill="#000080"/>
<rect x="1341" y="110" width="1" height="12" fill="#000080"/>
<rect x="1347" y="116" width="7" height="1" fill="#000080"/>
<rect x="1356" y="116" width="7" height="1" fill="#000080"/>
<rect x="1365" y="116" width="7" height="1" fill="#000080"/>
<rect x="1374" y="116" width="7" height="1" fill="#000080"/>
<rect x="1392" y="116" width="7" height="1" fill="#000080"/>
<rect x="1401" y="116" width="7" height="1" fill="#000080"/>
<rect x="1410" y="116" width="7" height="1" fill="#000080"/>
<rect x="1419" y="116" width="7" height="1" fill="#000080"/>
<rect x="1428" y="116" width="7" height="1" fill="#000080"/>
<rect x="1431" y="110" width="1" height="12" fill="#000080"/>
<rect x="1437" y="116" width="7" height="1" fill="#000080"/>
<rect x="1446" y="116" width="7" height="1" fill="#000080"/>
<rect x="1455" y="116" width="7" height="1" fill="#000080"/>
<rect x="1464" y="116" width="7" height="1" fill="#000080"/>
<g font-family="Liberation Sans" font-size="19.5" fill="#000080" stroke="#000080" stroke-width="0.9"><text x="937.2" y="123" text-anchor="middle">2</text><text x="1027.2" y="123" text-anchor="middle">3</text><text x="1117.2" y="123" text-anchor="middle">4</text><text x="1207.2" y="123" text-anchor="middle">5</text><text x="1297.2" y="123" text-anchor="middle">6</text><text x="1387.2" y="123" text-anchor="middle">7</text></g>
</svg>
<svg class="a" style="left:0;top:0" width="1464" height="130"><path d="M847.6 109H849.8V123H847.6V112.6Q846 114 844 114.6V112.5Q846.5 111.3 847.6 109Z" fill="#000080"/></svg>
<!-- /RULER -->
  <!-- tabs -->
  <div class="a" style="left:513px;top:101px;width:186px;height:5px;background:#fff;border:1px solid #a9a9a9"></div>
  <div class="a" style="left:576px;top:81px;width:49px;height:21px;background:#f0f0f0;border:1px solid #a9a9a9;border-bottom:none"></div>
  <div class="a" style="left:513px;top:79px;width:64px;height:24px;background:#fff;border:1px solid #a9a9a9;border-bottom:none"></div>
  <div class="t12" style="left:521px;top:83px">Directory</div>
  <div class="t12" style="left:581px;top:85px">Cliptext</div>
  <!-- drive combo -->
  <div class="a" style="left:513px;top:105px;width:189px;height:23px;background:linear-gradient(#f2f2f2,#e5e5e5);border:1px solid #acacac"></div>
  <div class="t12" style="left:518px;top:110px">[C:]</div>
  <svg class="a" style="left:688px;top:112px" width="12" height="10"><path d="M2 2L6 6 10 2" fill="none" stroke="#555" stroke-width="1.8"/></svg>
  <!-- tree -->
  <div class="a" style="left:513px;top:130px;width:189px;height:76px;background:#fff;border:1px solid #a0a0a0"></div>
  <div class="a" style="left:515px;top:150px;width:169px;height:18px;background:#f3f3f3;border-top:1px solid #e6e6e6;border-bottom:1px solid #e6e6e6"></div>
  <div class="a" style="left:684px;top:131px;width:17px;height:57px;background:#f0f0f0"></div>
  <div class="a" style="left:685px;top:150px;width:15px;height:17px;background:#cdcdcd"></div>
  <div class="a" style="left:514px;top:188px;width:187px;height:17px;background:#f0f0f0"></div>
  <div class="a" style="left:534px;top:189px;width:79px;height:15px;background:#cdcdcd"></div>
  <svg class="a" style="left:513px;top:130px" width="190" height="76">
    <g fill="none" stroke="#404040" stroke-width="1.8">
      <path d="M176 13L180 9 184 13"/><path d="M176 46L180 50 184 46"/>
      <path d="M12 62L8 66 12 70"/><path d="M160 62L164 66 160 70"/>
    </g>
  </svg>
  <div class="t12" style="left:555px;top:133.8px">burin</div>
  <div class="t12" style="left:560px;top:151.8px">Downloads</div>
  <div class="a" style="left:565px;top:169.8px;width:118px;height:17px;overflow:hidden"><div class="t12" style="left:0;top:0">api-ms-win-crt-runtime-l1-1-0</div></div>

  <svg class="a" style="left:0;top:0" width="1464" height="586">
    <defs>
      <pattern id="chk" width="2" height="2" patternUnits="userSpaceOnUse"><rect width="2" height="2" fill="#ffff66"/><rect width="1" height="1" fill="#d8d840"/><rect x="1" y="1" width="1" height="1" fill="#d8d840"/></pattern>
      <g id="fold"><path d="M0.5 12.5V2.5L2 1H6.5L8 2.5H13.5V12.5Z" fill="url(#chk)" stroke="#8a8a8a"/><path d="M1 13.5H14.5V3" fill="none" stroke="#111" stroke-width="1.2"/></g>
    </defs>
    <use href="#fold" x="534.5" y="134"/>
    <g transform="translate(539.5,152)"><path d="M1.5 11.5V2.5L3 1H7.5L9 2.5H13.5V11.5Z" fill="url(#chk)" stroke="#8a8a8a"/><path d="M0.5 5.5H11.5L14.5 12H3Z" fill="url(#chk)" stroke="#555"/><path d="M2 12.8H15" stroke="#111" stroke-width="1.2"/></g>
    <use href="#fold" x="544.5" y="170"/>
    <use href="#fold" x="517.5" y="543"/>
  </svg>
  <!-- file list -->
  <div class="a" style="left:513px;top:208px;width:189px;height:308px;background:#fff;border:1px solid #a0a0a0"></div>
  <div class="a" style="left:515px;top:211px;width:169px;height:15px;background:#3399ff"></div>
  <div class="t12" style="left:518px;top:212.5px;color:#fff">memmysql.php</div>
  <div class="a" style="left:517px;top:227px;width:166px;height:287px;background:#000"></div>
  <div class="a" style="left:684px;top:209px;width:17px;height:306px;background:#f0f0f0"></div>
  <div class="a" style="left:685px;top:322px;width:15px;height:59px;background:#cdcdcd"></div>
  <svg class="a" style="left:684px;top:209px" width="17" height="306">
    <g fill="none" stroke="#404040" stroke-width="1.8">
      <path d="M4.5 14L8.5 10 12.5 14"/><path d="M4.5 290L8.5 294 12.5 290"/>
    </g>
  </svg>

  <!-- file tab bar -->
  <div class="a" style="left:537px;top:540px;width:1px;height:19px;background:#e3e3e3"></div>
  <div class="a" style="left:539px;top:539px;width:119px;height:19px;background:#eef3fa;border-right:1px solid #e0e6ee"></div>
  <svg class="a" style="left:551px;top:545px" width="11" height="11"><path d="M5.5 1.5L9.5 5.5 5.5 9.5 1.5 5.5Z" fill="#3fbfd0" stroke="#1a1a1a" stroke-width="0.9"/></svg>
  <div class="t12" style="left:563.5px;top:544px">memmysql.php</div>
  <!-- status bar -->
  <div class="a" style="left:512px;top:538px;width:1px;height:44px;background:#dcdcdc"></div>
  <div class="t12" style="left:515px;top:565.5px;letter-spacing:-0.4px">For Help, press F1</div>
  <div class="t12" style="left:1149.5px;top:565.5px">ln 320</div>
  <div class="t12" style="left:1207.5px;top:565.5px">col 1</div>
  <div class="t12" style="left:1258px;top:565.5px">333</div>
  <div class="t12" style="left:1302px;top:565.5px">20</div>
  <div class="t12" style="left:1334px;top:565.5px">PC</div>
  <div class="t12" style="left:1386px;top:565.5px">UTF-8</div>
  <div class="a" style="left:1202px;top:564px;width:1px;height:16px;background:#d5d5d5"></div>
  <div class="a" style="left:1253px;top:564px;width:1px;height:16px;background:#d5d5d5"></div>
  <div class="a" style="left:1297px;top:564px;width:1px;height:16px;background:#d5d5d5"></div>
  <div class="a" style="left:1329px;top:564px;width:1px;height:16px;background:#d5d5d5"></div>
  <div class="a" style="left:1381px;top:564px;width:1px;height:16px;background:#d5d5d5"></div>
  <div class="a" style="left:1432px;top:564px;width:1px;height:16px;background:#d5d5d5"></div>
  <!-- filter combo -->
  <div class="a" style="left:513px;top:516px;width:189px;height:23px;background:linear-gradient(#f2f2f2,#e5e5e5);border:1px solid #acacac"></div>
  <div class="t12" style="left:517px;top:520.5px">All Files (*.*)</div>
  <svg class="a" style="left:688px;top:522px" width="12" height="10"><path d="M2 2L6 6 10 2" fill="none" stroke="#555" stroke-width="1.8"/></svg>
</div>
</body></html>
